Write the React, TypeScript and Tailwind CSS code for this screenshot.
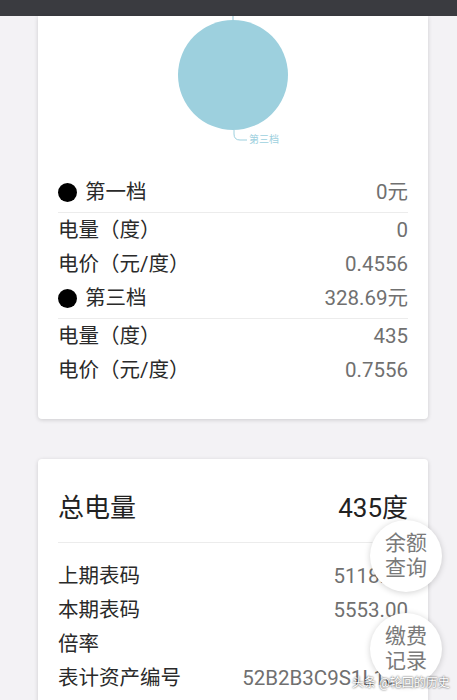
import React from 'react';

const font = { fontFamily: 'Roboto, "Noto Sans CJK SC", sans-serif' };

type Row = { label: string; value: string };

const tiers: { name: string; total: string; rows: Row[] }[] = [
  {
    name: '第一档',
    total: '0元',
    rows: [
      { label: '电量（度）', value: '0' },
      { label: '电价（元/度）', value: '0.4556' },
    ],
  },
  {
    name: '第三档',
    total: '328.69元',
    rows: [
      { label: '电量（度）', value: '435' },
      { label: '电价（元/度）', value: '0.7556' },
    ],
  },
];

const meterRows: Row[] = [
  { label: '上期表码', value: '5118.00' },
  { label: '本期表码', value: '5553.00' },
  { label: '倍率', value: '1' },
];

function Pie() {
  return (
    <svg width="390" height="159" viewBox="0 0 390 159" className="block">
      <line x1="195" y1="0" x2="195" y2="4" stroke="#8fc3d2" strokeWidth="1" />
      <circle cx="195" cy="59" r="55" fill="#9dd0de" />
      <path d="M196 114 L196 118 Q196 124 202 124 L209 124" fill="none" stroke="#9dd0de" strokeWidth="1" />
      <text x="211" y="127" fontSize="10" fill="#9dd0de" style={font}>第三档</text>
    </svg>
  );
}

function FloatBtn({ top, lines }: { top: string; lines: string[] }) {
  return (
    <div
      className={`absolute left-[370px] ${top} w-[72px] h-[72px] rounded-full bg-white shadow-[0_1px_6px_rgba(0,0,0,0.18)] flex flex-col items-center justify-center text-[21px] leading-[25px] text-[#7a7a7a]`}
    >
      {lines.map((l) => (
        <span key={l}>{l}</span>
      ))}
    </div>
  );
}

export default function App() {
  return (
    <div className="relative w-[457px] h-[700px] overflow-hidden bg-[#f3f2f5]" style={font}>
      <div className="h-[16px] bg-[#3a3b40]" />

      <div className="ml-[38px] w-[390px] bg-white rounded-b shadow-[0_1px_4px_rgba(0,0,0,0.16)] pb-[32px]">
        <Pie />
        <div className="px-[20px] text-[20.5px]">
          {tiers.map((t) => (
            <div key={t.name}>
              <div className="pb-[3px] border-b border-[#ececec]">
                <div className="h-[34px] flex items-center justify-between">
                  <div className="flex items-center gap-[8px] text-[#2a2a2a]">
                    <span className="w-[19px] h-[19px] rounded-full bg-black" />
                    <span>{t.name}</span>
                  </div>
                  <span className="text-[#707070]">{t.total}</span>
                </div>
              </div>
              {t.rows.map((r) => (
                <div key={r.label} className="h-[34px] flex items-center justify-between">
                  <span className="text-[#2a2a2a]">{r.label}</span>
                  <span className="text-[#707070]">{r.value}</span>
                </div>
              ))}
            </div>
          ))}
        </div>
      </div>

      <div className="ml-[38px] w-[390px] mt-[40px] bg-white rounded-t shadow-[0_1px_4px_rgba(0,0,0,0.16)] px-[20px] pt-[29px]">
        <div className="pb-[14px] border-b border-[#ececec]">
          <div className="h-[40px] flex items-center justify-between text-[26px] text-[#222]">
            <span>总电量</span>
            <span>435度</span>
          </div>
        </div>
        <div className="pt-[16px] text-[20.5px]">
          {meterRows.map((r) => (
            <div key={r.label} className="h-[34px] flex items-center justify-between">
              <span className="text-[#2a2a2a]">{r.label}</span>
              <span className="text-[#707070]">{r.value}</span>
            </div>
          ))}
          <div className="flex justify-between">
            <span className="h-[34px] flex items-center text-[#2a2a2a]">表计资产编号</span>
            <div className="flex flex-col items-end text-[#707070] leading-[34px]">
              <span>52B2B3C9S1L100</span>
              <span>00000</span>
            </div>
          </div>
        </div>
      </div>

      <FloatBtn top="top-[520px]" lines={['余额', '查询']} />
      <FloatBtn top="top-[613px]" lines={['缴费', '记录']} />

      <div className="absolute left-[352px] top-[675px] whitespace-nowrap text-[12px] leading-[16px] text-white [text-shadow:0_0_2px_rgba(0,0,0,0.9)]">
        头条 @轮回的历史
      </div>
    </div>
  );
}
